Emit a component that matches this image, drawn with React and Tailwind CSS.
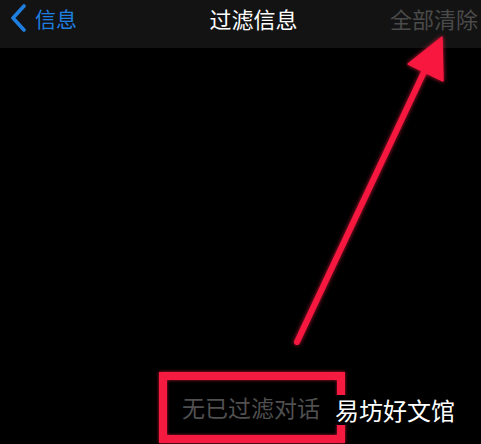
const font = { fontFamily: '"Noto Sans CJK SC", "Noto Sans", sans-serif' };

function BackChevron() {
  return (
    <svg width="20" height="28" viewBox="0 0 20 28" className="mr-[6px]">
      <polyline
        points="15,2 4,14 15,26"
        fill="none"
        stroke="#1e7fe0"
        strokeWidth="3.6"
        strokeLinecap="round"
        strokeLinejoin="round"
      />
    </svg>
  );
}

function Arrow() {
  return (
    <svg
      className="pointer-events-none absolute inset-0"
      width="481"
      height="444"
      viewBox="0 0 481 444"
    >
      <g style={{ filter: "drop-shadow(0 0 2px rgba(255,30,70,0.8))" }} fill="#f8183f" stroke="#f8183f">
        <line x1="297" y1="342" x2="424" y2="72" strokeWidth="6" strokeLinecap="round" />
        <polygon points="442,37 443,81 408,64" strokeWidth="1.5" strokeLinejoin="round" />
      </g>
    </svg>
  );
}

export default function App() {
  return (
    <div className="relative h-[444px] w-[481px] overflow-hidden bg-black" style={font}>
      <header className="flex h-[48px] items-start justify-between bg-[#131313] pl-[9px] pr-[3px] pt-[4px]">
        <div className="flex items-center text-[#1e7fe0]">
          <BackChevron />
          <span className="text-[21px] leading-[28px]">信息</span>
        </div>
        <h1 className="ml-[40px] text-[22px] leading-[28px] text-white">过滤信息</h1>
        <span className="text-[22px] leading-[28px] text-[#4a4a4a]">全部清除</span>
      </header>

      <main className="flex flex-col pl-[159px] pt-[324px]">
        <div
          className="flex h-[71px] w-[186px] items-center border-[8px] border-[#f51a40] pl-[15px]"
          style={{ boxShadow: "0 0 3px rgba(255,30,70,0.8), inset 0 0 3px rgba(255,30,70,0.8)" }}
        >
          <span className="text-[23px] leading-none text-[#505050]">无已过滤对话</span>
        </div>
      </main>

      <Arrow />

      <div className="absolute left-[335px] top-[395px] bg-black pr-[2px] text-[24px] leading-[30px] text-white">
        易坊好文馆
      </div>
    </div>
  );
}
